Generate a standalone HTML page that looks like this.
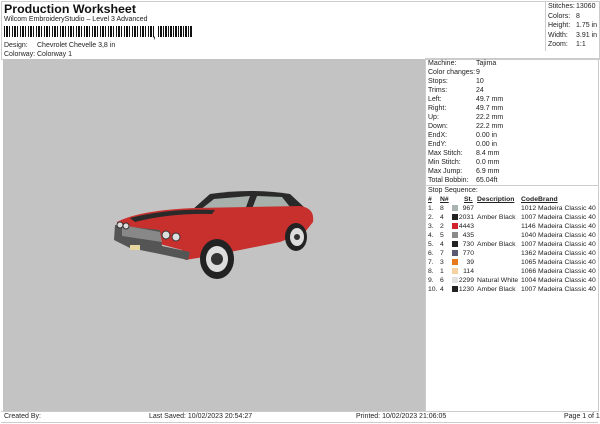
<!DOCTYPE html>
<html><head><style>
body{margin:0;width:600px;height:424px;background:#fff;font-family:"Liberation Sans",sans-serif;color:#222;position:relative;overflow:hidden}
div{position:absolute;white-space:nowrap}
.t{font-size:7px;line-height:9px}
.s{font-size:6.8px;line-height:9px}
.b{border:1px solid #bbb}
</style></head><body>
<div class="b" style="left:1px;top:1px;width:597px;height:57px;border-color:#ccc"></div>
<div style="left:4px;top:2px;font-size:12.4px;font-weight:bold;line-height:14px;color:#111">Production Worksheet</div>
<div class="t" style="left:4px;top:15px">Wilcom EmbroideryStudio – Level 3 Advanced</div>
<div style="left:4px;top:26px;width:150px;height:11px;background:repeating-linear-gradient(90deg,#111 0 1px,#fff 1px 2px,#111 2px 4px,#fff 4px 5px,#111 5px 6px,#fff 6px 8px)"></div>
<div style="left:153px;top:30px;font-size:9px;font-weight:bold">,</div>
<div style="left:158px;top:26px;width:34px;height:11px;background:repeating-linear-gradient(90deg,#111 0 1px,#fff 1px 2px,#111 2px 4px,#fff 4px 5px)"></div>
<div class="t" style="left:4px;top:41px">Design:</div><div class="t" style="left:37px;top:41px">Chevrolet Chevelle 3,8 in</div>
<div class="t" style="left:4px;top:50px">Colorway:</div><div class="t" style="left:37px;top:50px">Colorway 1</div>
<div style="left:545px;top:1px;width:1px;height:50px;background:#ccc"></div>
<div class="t" style="left:548px;top:2px;line-height:9.5px">Stitches:<br>Colors:<br>Height:<br>Width:<br>Zoom:</div>
<div class="t" style="left:576px;top:2px;line-height:9.5px">13060<br>8<br>1.75 in<br>3.91 in<br>1:1</div>
<div style="left:3px;top:59px;width:422px;height:352px;background:#c3c3c3"></div>
<div class="b" style="left:425px;top:58px;width:172px;height:352px;border-color:#ccc"></div>
<div class="t" style="left:428px;top:59px">Machine:<br>Color changes:<br>Stops:<br>Trims:<br>Left:<br>Right:<br>Up:<br>Down:<br>EndX:<br>EndY:<br>Max Stitch:<br>Min Stitch:<br>Max Jump:<br>Total Bobbin:</div>
<div class="t" style="left:476px;top:59px">Tajima<br>9<br>10<br>24<br>49.7 mm<br>49.7 mm<br>22.2 mm<br>22.2 mm<br>0.00 in<br>0.00 in<br>8.4 mm<br>0.0 mm<br>6.9 mm<br>65.04ft</div>
<div style="left:426px;top:185px;width:172px;height:1px;background:#ccc"></div>
<div class="t" style="left:428px;top:186px">Stop Sequence:</div>
<div class="s" style="left:428px;top:195px;font-weight:bold;text-decoration:underline">#</div>
<div class="s" style="left:440px;top:195px;font-weight:bold;text-decoration:underline">N#</div>
<div class="s" style="left:464px;top:195px;font-weight:bold;text-decoration:underline">St.</div>
<div class="s" style="left:477px;top:195px;font-weight:bold;text-decoration:underline">Description</div>
<div class="s" style="left:521px;top:195px;font-weight:bold;text-decoration:underline">Code</div>
<div class="s" style="left:538px;top:195px;font-weight:bold;text-decoration:underline">Brand</div>
<div class="s" style="left:428px;top:204px">1.<br>2.<br>3.<br>4.<br>5.<br>6.<br>7.<br>8.<br>9.<br>10.</div>
<div class="s" style="left:440px;top:204px">8<br>4<br>2<br>5<br>4<br>7<br>3<br>1<br>6<br>4</div>
<div style="left:452px;top:205px;width:6px;height:6px;background:#a9b3b3"></div>
<div style="left:452px;top:214px;width:6px;height:6px;background:#222"></div>
<div style="left:452px;top:223px;width:6px;height:6px;background:#d2222a"></div>
<div style="left:452px;top:232px;width:6px;height:6px;background:#8a8a8a"></div>
<div style="left:452px;top:241px;width:6px;height:6px;background:#222"></div>
<div style="left:452px;top:250px;width:6px;height:6px;background:#5a5a72"></div>
<div style="left:452px;top:259px;width:6px;height:6px;background:#e8781e"></div>
<div style="left:452px;top:268px;width:6px;height:6px;background:#f6d2a2"></div>
<div style="left:452px;top:277px;width:6px;height:6px;background:#e2e2e2"></div>
<div style="left:452px;top:286px;width:6px;height:6px;background:#222"></div>
<div class="s" style="left:458px;top:204px;width:16px;text-align:right">967<br>2031<br>4443<br>435<br>730<br>770<br>39<br>114<br>2299<br>1230</div>
<div class="s" style="left:477px;top:204px"><br>Amber Black<br><br><br>Amber Black<br><br><br><br>Natural White<br>Amber Black</div>
<div class="s" style="left:521px;top:204px">1012<br>1007<br>1146<br>1040<br>1007<br>1362<br>1065<br>1066<br>1004<br>1007</div>
<div class="s" style="left:538px;top:204px">Madeira Classic 40<br>Madeira Classic 40<br>Madeira Classic 40<br>Madeira Classic 40<br>Madeira Classic 40<br>Madeira Classic 40<br>Madeira Classic 40<br>Madeira Classic 40<br>Madeira Classic 40<br>Madeira Classic 40</div>
<svg style="position:absolute;left:100px;top:180px" width="240" height="110" viewBox="0 0 240 110">
<path d="M92 30 L110 14 Q150 8 190 14 L205 28 Z" fill="#2a2a2a"/>
<path d="M100 30 L114 19 L150 16 L145 30 Z" fill="#a8b0ac"/>
<path d="M152 29 L157 16 L182 17 L190 27 Z" fill="#a8b0ac"/>
<path d="M17 42 Q40 30 95 28 L200 26 Q215 28 213 42 L205 52 L180 62 L110 76 L85 80 L82 70 L45 60 L17 55 Z" fill="#c8302e"/>
<path d="M30 38 Q70 28 115 30 L112 34 Q70 33 35 42 Z" fill="#2a2a2a"/>
<path d="M15 45 L60 50 L62 66 L90 72 L88 80 L60 74 L30 68 L14 60 Z" fill="#555"/>
<path d="M22 45 L60 52 L62 62 L22 56 Z" fill="#888"/>
<circle cx="66" cy="55" r="4" fill="#ddd" stroke="#333"/><circle cx="76" cy="57" r="4" fill="#ddd" stroke="#333"/>
<circle cx="20" cy="45" r="3" fill="#ddd" stroke="#333"/><circle cx="26" cy="46" r="3" fill="#ddd" stroke="#333"/>
<ellipse cx="117" cy="79" rx="17" ry="20" fill="#222"/><ellipse cx="117" cy="79" rx="11" ry="13" fill="#ddd"/><circle cx="117" cy="79" r="6" fill="#333"/>
<ellipse cx="196" cy="57" rx="11" ry="14" fill="#222"/><ellipse cx="197" cy="57" rx="7" ry="9" fill="#ddd"/><circle cx="197" cy="57" r="3" fill="#333"/>
<rect x="30" y="65" width="10" height="5" fill="#e8d8a0"/>
</svg>
<div style="left:1px;top:411px;width:597px;height:1px;background:#ccc"></div>
<div style="left:1px;top:422px;width:597px;height:1px;background:#ccc"></div>
<div class="t" style="left:4px;top:412px">Created By:</div>
<div class="t" style="left:149px;top:412px">Last Saved: 10/02/2023 20:54:27</div>
<div class="t" style="left:356px;top:412px">Printed: 10/02/2023 21:06:05</div>
<div class="t" style="left:564px;top:412px">Page 1 of 1</div>
</body></html>
